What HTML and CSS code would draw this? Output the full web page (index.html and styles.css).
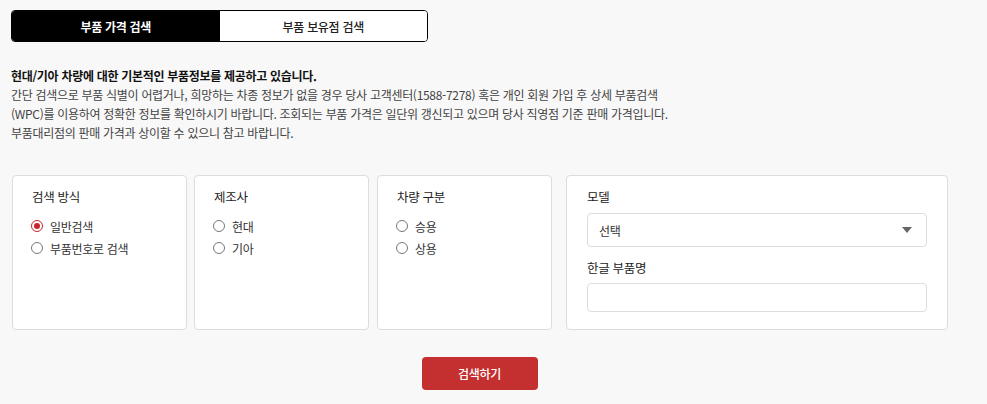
FILE: index.html
```html
<!DOCTYPE html>
<html lang="ko">
<head>
  <meta charset="UTF-8" />
  <meta name="viewport" content="width=device-width, initial-scale=1.0"/>
  <title>부품 가격 검색</title>
  <link rel="stylesheet" href="styles.css">
</head>
<body>
  <div class="wrap">
    <div class="tabs">
      <button class="tab active">부품 가격 검색</button>
      <button class="tab">부품 보유점 검색</button>
    </div>

    <div class="intro">
      <p class="intro-title">현대/기아 차량에 대한 기본적인 부품정보를 제공하고 있습니다.</p>
      <p>간단 검색으로 부품 식별이 어렵거나, 희망하는 차종 정보가 없을 경우 당사 고객센터(1588-7278) 혹은 개인 회원 가입 후 상세 부품검색<br>
      (WPC)를 이용하여 정확한 정보를 확인하시기 바랍니다. 조회되는 부품 가격은 일단위 갱신되고 있으며 당사 직영점 기준 판매 가격입니다.<br>
      부품대리점의 판매 가격과 상이할 수 있으니 참고 바랍니다.</p>
    </div>

    <div class="cards">
      <div class="card">
        <div class="card-title">검색 방식</div>
        <label class="radio"><input type="radio" name="method" checked><span>일반검색</span></label>
        <label class="radio"><input type="radio" name="method"><span>부품번호로 검색</span></label>
      </div>
      <div class="card">
        <div class="card-title">제조사</div>
        <label class="radio"><input type="radio" name="maker"><span>현대</span></label>
        <label class="radio"><input type="radio" name="maker"><span>기아</span></label>
      </div>
      <div class="card">
        <div class="card-title">차량 구분</div>
        <label class="radio"><input type="radio" name="type"><span>승용</span></label>
        <label class="radio"><input type="radio" name="type"><span>상용</span></label>
      </div>
      <div class="card card-wide">
        <div class="card-title">모델</div>
        <div class="select">
          <span>선택</span>
          <span class="arrow"></span>
        </div>
        <div class="card-title sub">한글 부품명</div>
        <input class="text-input" type="text">
      </div>
    </div>

    <div class="actions">
      <button class="search-btn">검색하기</button>
    </div>
  </div>
</body>
</html>
```

FILE: styles.css
```css
body {
  margin: 0;
  background: #f8f8f8;
  font-family: "Noto Sans CJK KR", "Noto Sans", sans-serif;
  font-size: 12px;
  letter-spacing: -0.3px;
  color: #444;
}

.wrap {
  width: 937px;
  padding: 10px 0 0 11px;
}

.tabs {
  display: flex;
  width: 415px;
  height: 30px;
  border: 1px solid #000;
  border-radius: 4px;
  overflow: hidden;
  background: #fff;
}

.tab {
  flex: 1;
  border: none;
  background: #fff;
  color: #222;
  font-family: inherit;
  font-size: 12px;
  font-weight: 500;
  letter-spacing: inherit;
  padding: 0;
}

.tab.active {
  background: #000;
  color: #fff;
  font-weight: bold;
}

.intro {
  margin-top: 24px;
  line-height: 19px;
}

.intro p {
  margin: 0;
}

.intro-title {
  font-weight: bold;
  color: #111;
}

.cards {
  display: flex;
  margin-top: 33px;
  padding-left: 1px;
}

.card {
  flex-shrink: 0;
  height: 153px;
  width: 135px;
  padding: 0 19px;
  background: #fff;
  border: 1px solid #ddd;
  border-radius: 4px;
}

.card + .card {
  margin-left: 7px;
}

.card:nth-child(3) {
  margin-left: 8px;
}

.card.card-wide {
  width: 340px;
  padding: 0 20px;
  margin-left: 14px;
}

.card-title {
  margin-top: 12px;
  line-height: 18px;
  font-size: 12.5px;
  color: #222;
}

.radio {
  display: flex;
  align-items: center;
  height: 22px;
  color: #333;
}

.card-title + .radio {
  margin-top: 9px;
}

.radio input {
  appearance: none;
  width: 12px;
  height: 12px;
  margin: 0 7px 0 -1px;
  border: 1.5px solid #777;
  border-radius: 50%;
  box-sizing: border-box;
  display: flex;
  align-items: center;
  justify-content: center;
}

.radio input:checked {
  border-color: #c8262c;
}

.radio input:checked::after {
  content: "";
  width: 6px;
  height: 6px;
  border-radius: 50%;
  background: #c8262c;
}

.select {
  display: flex;
  justify-content: space-between;
  align-items: center;
  height: 32px;
  margin-top: 7px;
  padding: 0 14px 0 11px;
  border: 1px solid #ddd;
  border-radius: 4px;
  color: #333;
}

.arrow {
  width: 0;
  height: 0;
  border-left: 5px solid transparent;
  border-right: 5px solid transparent;
  border-top: 6px solid #666;
}

.card-title.sub {
  margin-top: 12px;
}

.text-input {
  display: block;
  width: 100%;
  height: 29px;
  margin-top: 6px;
  box-sizing: border-box;
  border: 1px solid #ddd;
  border-radius: 4px;
  background: #fff;
}

.actions {
  display: flex;
  justify-content: center;
  margin-top: 27px;
}

.search-btn {
  width: 116px;
  height: 33px;
  border: none;
  border-radius: 4px;
  background: #c3302f;
  color: #fff;
  font-family: inherit;
  font-size: 12px;
  font-weight: 500;
  letter-spacing: inherit;
}
```
